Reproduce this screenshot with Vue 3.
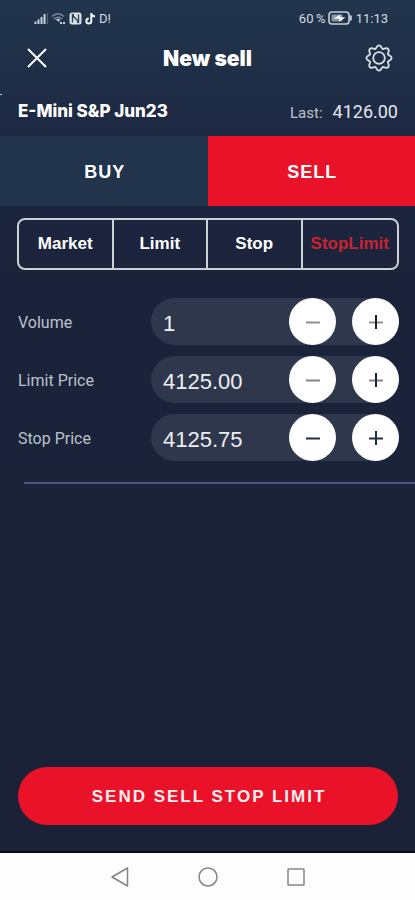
<script setup>
import { ref, reactive, computed } from 'vue'

const side = ref('sell')
const types = ['Market', 'Limit', 'Stop', 'StopLimit']
const orderType = ref('StopLimit')

const fields = reactive([
  { id: 'volume', label: 'Volume', value: 1, step: 1, digits: 0, minus: '#8f8f8f', bar: '#8f8f8f', stem: '#1c2128' },
  { id: 'limit-price', label: 'Limit Price', value: 4125, step: 0.25, digits: 2, minus: '#858585', bar: '#858585', stem: '#1b2545' },
  { id: 'stop-price', label: 'Stop Price', value: 4125.75, step: 0.25, digits: 2, minus: '#1b3045', bar: '#1b3045', stem: '#1b3045' },
])

const sendLabel = computed(() => {
  const kind = orderType.value === 'StopLimit' ? 'Stop Limit' : orderType.value
  return `Send ${side.value} ${kind}`.toUpperCase()
})

function change(field, direction) {
  field.value = Math.max(0, field.value + direction * field.step)
}

function commit(field, event) {
  const next = Number(event.target.value)
  if (!Number.isNaN(next)) field.value = next
}
</script>

<template>
  <div class="screen">
    <div class="status">
      <div class="status-group">
        <svg width="14" height="13" viewBox="0 0 14 13">
          <path d="M1.500 12v-2.500M4.500 12V7.500M7.500 12V5M10.500 12V2" stroke="#c9d2dc" stroke-width="2" />
          <path d="M13.300 12V1" stroke="#56677b" stroke-width="1.200" />
        </svg>
        <svg width="15" height="13" viewBox="0 0 15 13" fill="none">
          <path d="M1 4.500Q7 -1 13 4.500M3 7Q7 3.400 11 7" stroke="#7d8b9b" stroke-width="1.500" />
          <path d="M5 7.500Q7 6 9 7.500L8 10Z" fill="#c9d2dc" />
          <path d="M9 11h2M12 11h2" stroke="#c9d2dc" stroke-width="2" />
        </svg>
        <svg width="13" height="13" viewBox="0 0 13 13">
          <rect x="0.500" y="0.500" width="12" height="12" rx="2.500" fill="#dce1e7" />
          <path d="M3.500 10.500V3.200L9.500 9.800V2.500M3.500 3.200Q3.500 2.500 5 2.500M9.500 9.800Q9.500 10.500 8 10.500" fill="none" stroke="#31435a" stroke-width="1.400" />
        </svg>
        <svg width="11" height="13" viewBox="0 0 11 13" fill="none">
          <path d="M6.300 1V9A2.500 2.500 0 1 1 3.800 6.500M6.300 1Q6.600 4.300 10 4.500" stroke="#f1f4f7" stroke-width="2" />
        </svg>
        <span>D!</span>
      </div>
      <div class="status-group right">
        <span>60&#8201;%</span>
        <svg width="24" height="14" viewBox="0 0 24 14">
          <rect x="1" y="1" width="20" height="12" rx="3" fill="none" stroke="#c9d0d8" stroke-width="1.600" />
          <rect x="3.500" y="3.500" width="11" height="7" rx="1" fill="#8996a5" />
          <path d="M22.800 4.500v5" stroke="#c9d0d8" stroke-width="2" />
          <path d="M5.500 7.500L12.500 3.500L12 6.200L17.500 6.500L11 10.500L11.200 7.800Z" fill="#fff" />
        </svg>
        <span class="clock">11:13</span>
      </div>
    </div>

    <header class="header">
      <button class="icon-btn close" type="button" aria-label="Close">
        <svg width="22" height="22" viewBox="0 0 22 22"><path d="M2 2L20 20M20 2L2 20" stroke="#fff" stroke-width="2" /></svg>
      </button>
      <h1>New sell</h1>
      <button class="icon-btn end" type="button" aria-label="Settings">
        <svg width="28" height="28" viewBox="0 0 28 28" fill="none" stroke="#d9dee4" stroke-width="1.800" stroke-linejoin="round">
          <path d="M12.200 2.400Q14 0.400 15.800 2.400L17.800 5.200L21.200 4.200Q23.800 4.200 23.800 6.800L22.800 10.200L25.600 12.200Q27.600 14 25.600 15.800L22.800 17.800L23.800 21.200Q23.800 23.800 21.200 23.800L17.800 22.800L15.800 25.600Q14 27.600 12.200 25.600L10.200 22.800L6.800 23.800Q4.200 23.800 4.200 21.200L5.200 17.800L2.400 15.800Q0.400 14 2.400 12.200L5.200 10.200L4.200 6.800Q4.200 4.200 6.800 4.200L10.200 5.200Z" />
          <circle cx="14" cy="14" r="5.800" />
        </svg>
      </button>
    </header>

    <div class="instrument">
      <h2>E-Mini S&amp;P Jun23</h2>
      <p class="last"><span>Last:</span><strong>4126.00</strong></p>
    </div>

    <div class="sides">
      <button type="button" :class="{ active: side === 'buy' }" @click="side = 'buy'">BUY</button>
      <button type="button" :class="{ active: side === 'sell' }" @click="side = 'sell'">SELL</button>
    </div>

    <div class="types">
      <button
        v-for="t in types"
        :key="t"
        type="button"
        :class="{ active: orderType === t }"
        @click="orderType = t"
      >{{ t }}</button>
    </div>

    <form class="fields" @submit.prevent>
      <div v-for="f in fields" :key="f.id" class="field">
        <label :for="f.id">{{ f.label }}</label>
        <div class="stepper">
          <input :id="f.id" type="text" inputmode="decimal" :value="f.value.toFixed(f.digits)" @change="commit(f, $event)" />
          <button type="button" :aria-label="`Decrease ${f.label}`" @click="change(f, -1)">
            <svg width="16" height="16" viewBox="0 0 16 16"><path d="M1 8.500H15" :stroke="f.minus" stroke-width="2" /></svg>
          </button>
          <button type="button" :aria-label="`Increase ${f.label}`" @click="change(f, 1)">
            <svg width="16" height="16" viewBox="0 0 16 16">
              <path d="M1 8.500H15" :stroke="f.bar" stroke-width="2" />
              <path d="M8 1V15" :stroke="f.stem" stroke-width="2" />
            </svg>
          </button>
        </div>
      </div>
    </form>

    <hr class="rule" />

    <div class="submit">
      <button type="button">{{ sendLabel }}</button>
    </div>

    <nav class="system-nav">
      <button type="button" aria-label="Back">
        <svg width="20" height="22" viewBox="0 0 20 22"><path d="M2 11L17.500 2V20Z" fill="none" stroke="#858585" stroke-width="1.500" stroke-linejoin="round" /></svg>
      </button>
      <button type="button" aria-label="Home">
        <svg width="20" height="22" viewBox="0 0 20 22"><circle cx="10" cy="11" r="9" fill="none" stroke="#858585" stroke-width="1.500" /></svg>
      </button>
      <button type="button" aria-label="Recent apps">
        <svg width="20" height="22" viewBox="0 0 20 22"><rect x="2" y="3" width="16" height="16" rx="0.500" fill="none" stroke="#858585" stroke-width="1.500" /></svg>
      </button>
    </nav>
  </div>
</template>

<style>
body {
  background: #1b2237;
}
</style>

<style scoped>
.screen {
  box-sizing: border-box;
  min-height: 100vh;
  display: flex;
  flex-direction: column;
  color: #fff;
  font-family: "Liberation Sans", Arial, sans-serif;
  background: linear-gradient(180deg, #21354c 0, #1f2e47 80px, #1d2741 140px, #1b233a 300px, #1b2237 100%);
}

button {
  margin: 0;
  padding: 0;
  border: 0;
  background: none;
  color: inherit;
  font: inherit;
  cursor: pointer;
}

svg {
  display: block;
}

.status {
  display: flex;
  justify-content: space-between;
  align-items: center;
  height: 36px;
  padding: 0 27px 0 34px;
  color: #d5dbe2;
  font-family: Roboto, sans-serif;
  font-size: 13px;
}

.status-group {
  display: flex;
  align-items: center;
  gap: 3px;
}

.status-group.right {
  gap: 2px;
}

.clock {
  margin-left: 2px;
}

.header {
  display: grid;
  grid-template-columns: 1fr auto 1fr;
  align-items: center;
  height: 44px;
  padding: 0 22px;
}

.icon-btn {
  justify-self: start;
}

.icon-btn.close {
  padding-left: 4px;
}

.icon-btn.end {
  justify-self: end;
}

h1,
h2,
p {
  margin: 0;
}

h1 {
  font-family: Inter, sans-serif;
  font-size: 21px;
  font-weight: 900;
}

.instrument {
  position: relative;
  display: flex;
  justify-content: space-between;
  align-items: center;
  box-sizing: border-box;
  height: 56px;
  padding: 6px 17px 0 18px;
}

.instrument::before {
  content: "";
  position: absolute;
  left: 0;
  top: 14px;
  width: 2px;
  height: 1px;
  background: #c3ccd6;
}

h2 {
  font-family: Inter, sans-serif;
  font-size: 17px;
  font-weight: 800;
}

.last {
  display: flex;
  align-items: baseline;
  gap: 10px;
  font-family: Roboto, sans-serif;
  font-size: 15px;
  color: #bcc3cd;
}

.last strong {
  color: #e3e7ec;
  font-size: 18px;
  font-weight: 400;
}

.sides {
  display: grid;
  grid-template-columns: 1fr 1fr;
}

.sides button {
  height: 70px;
  padding: 2px 0 0 2px;
  background: #21344b;
  font-size: 18px;
  font-weight: 700;
  letter-spacing: 1px;
}

.sides button.active {
  background: #ea1228;
}

.types {
  display: grid;
  grid-template-columns: repeat(4, minmax(0, 1fr));
  margin: 12px 16px 0 17px;
  border: 2px solid #cdd1d6;
  border-radius: 8px;
}

.types button {
  height: 48px;
  font-size: 17px;
  font-weight: 700;
}

.types button:not(:last-child) {
  border-right: 2px solid #cdd1d6;
}

.types button.active {
  color: #c92332;
}

.fields {
  display: flex;
  flex-direction: column;
  gap: 11px;
  padding: 28px 16px 0 18px;
}

.field {
  display: grid;
  grid-template-columns: 133px minmax(0, 1fr);
  align-items: center;
}

.field label {
  padding-top: 2px;
  font-family: Roboto, sans-serif;
  font-size: 16px;
  color: #bcc1cb;
}

.stepper {
  display: flex;
  gap: 16px;
  border-radius: 24px;
  background: #2f374d;
}

.stepper input {
  flex: 1;
  width: 0;
  min-width: 0;
  box-sizing: border-box;
  height: 47px;
  margin: 0;
  padding: 4px 0 0 12px;
  border: 0;
  outline: 0;
  background: none;
  color: #eceef2;
  font: inherit;
  font-size: 22px;
}

.stepper button {
  display: grid;
  place-items: center;
  flex: none;
  width: 47px;
  height: 47px;
  border-radius: 50%;
  background: #fff;
}

.rule {
  width: auto;
  height: 2px;
  margin: 21px 0 0 24px;
  border: 0;
  background: #4a5680;
}

.submit {
  margin-top: auto;
  padding: 24px 17px 26px 18px;
  border-bottom: 2px solid #070b18;
}

.submit button {
  width: 100%;
  height: 58px;
  padding: 2px 0 0 2px;
  border-radius: 29px;
  background: #ea1228;
  color: #ffeff0;
  font-size: 17px;
  font-weight: 700;
  letter-spacing: 2px;
}

.system-nav {
  display: flex;
  justify-content: center;
  gap: 68px;
  padding: 13px 0 12px;
  background: #fdfdfd;
}
</style>
